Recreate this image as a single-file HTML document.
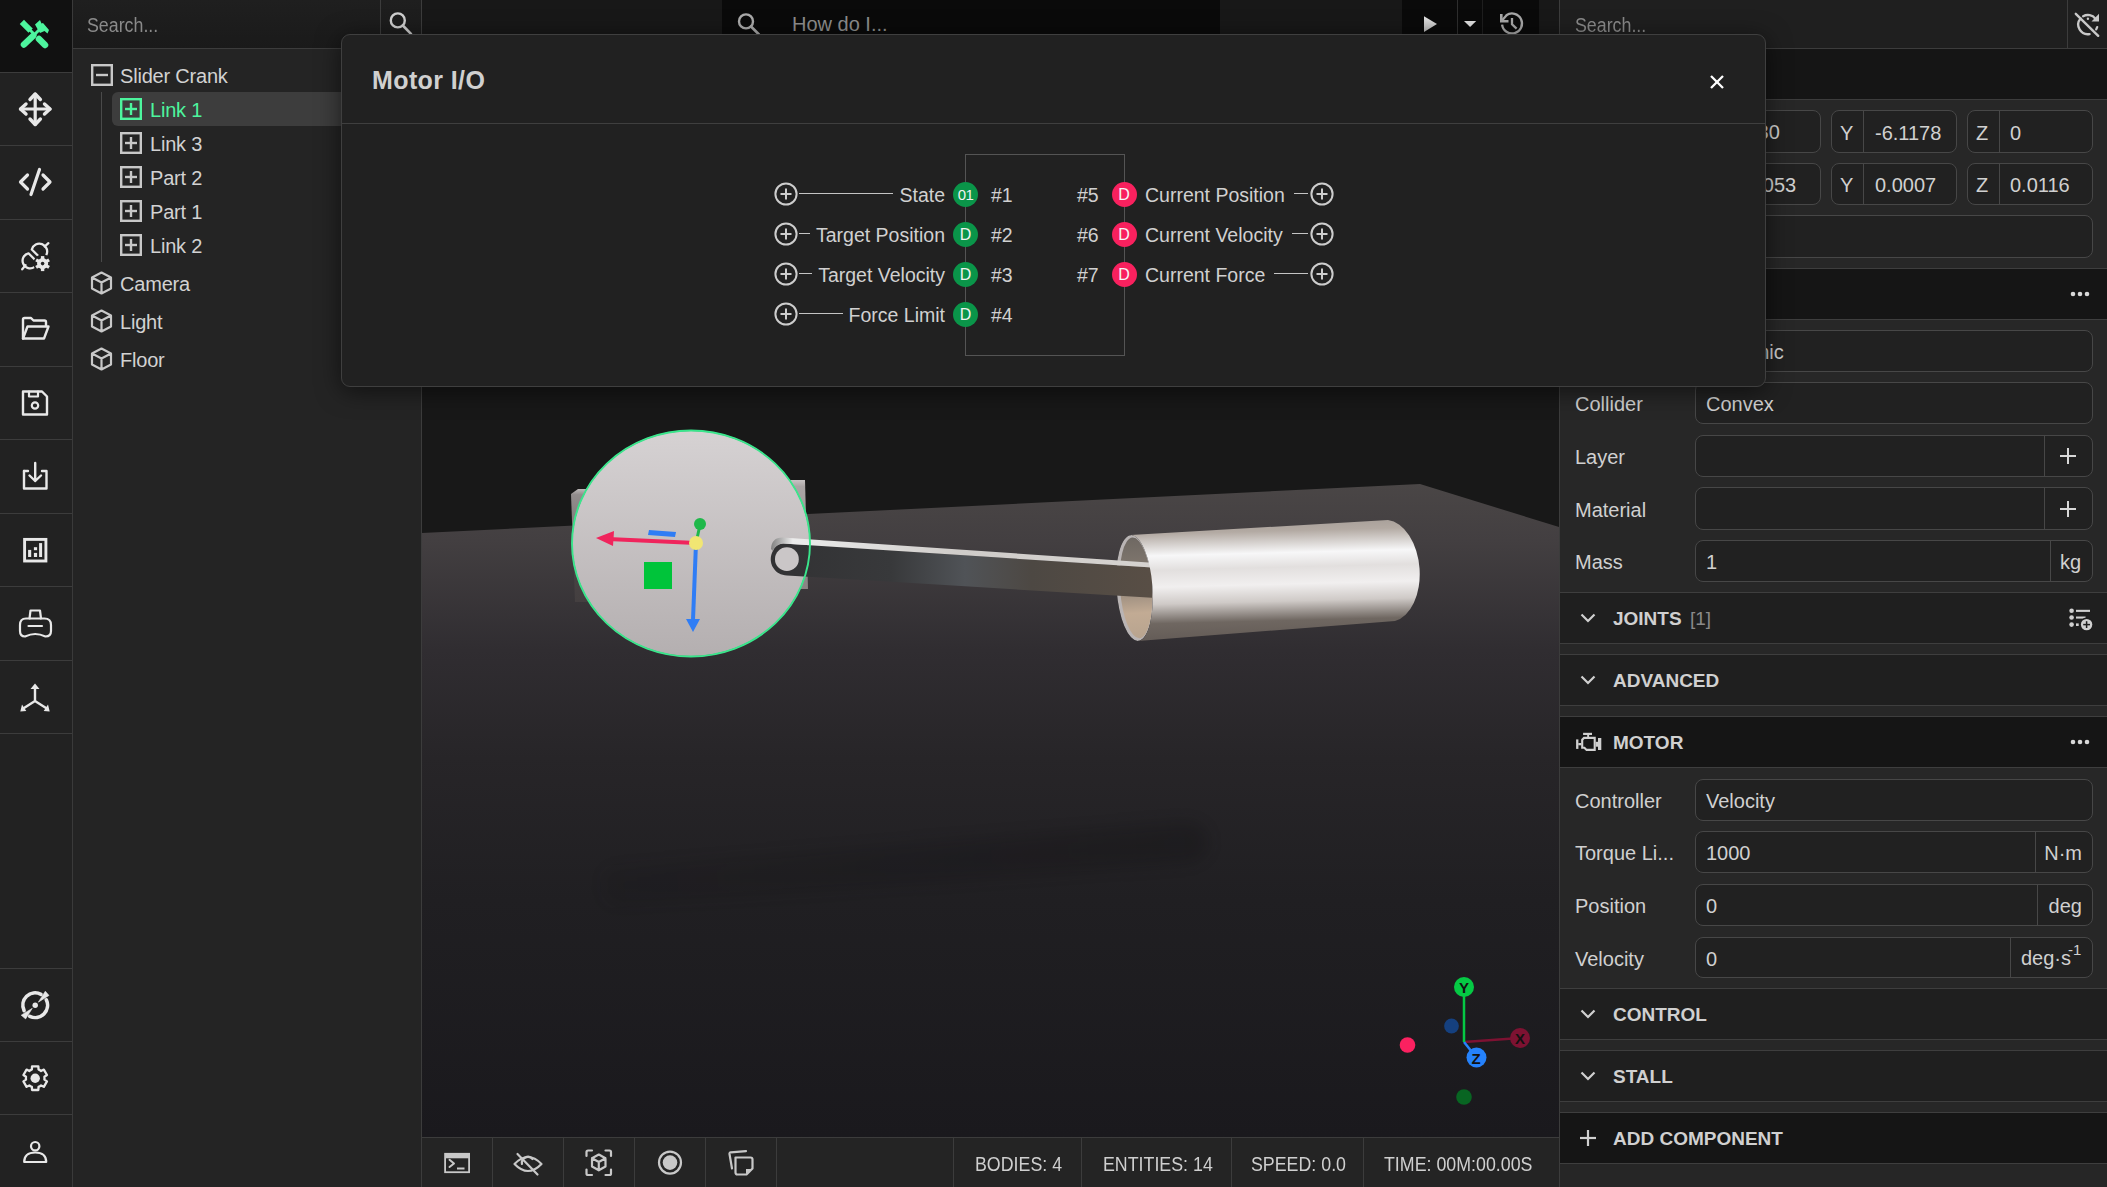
<!DOCTYPE html>
<html><head><meta charset="utf-8">
<style>
html,body{margin:0;padding:0;width:2107px;height:1187px;overflow:hidden;background:#262626;font-family:"Liberation Sans",sans-serif;color:#d0d0d0;}
.a{position:absolute;}
.hl{position:absolute;height:1px;background:#3c3c3c;}
.vl{position:absolute;width:1px;background:#3c3c3c;}
svg{position:absolute;overflow:visible;}
.ico{fill:none;stroke:#e0e0e0;stroke-width:2.4;stroke-linecap:round;stroke-linejoin:round;}
.t{position:absolute;white-space:pre;line-height:1;}
.tree{font-size:20px;color:#d2d2d2;letter-spacing:-0.2px;}
.lbl{font-size:20px;color:#d2d2d2;}
.inp{position:absolute;left:1695px;width:396px;height:40px;border:1px solid #454545;border-radius:8px;background:#212121;box-sizing:content-box;}
.sec{position:absolute;left:1560px;width:547px;background:#1f1f1f;border-top:1px solid #3e3e3e;border-bottom:1px solid #3e3e3e;}
.sech{font-size:19px;font-weight:bold;color:#d0d0d0;}
</style></head><body>

<!-- LEFT TOOLBAR -->
<div class="a" id="toolbar" style="left:0;top:0;width:72px;height:1187px;background:#222222;"></div>
<div class="a" style="left:0;top:0;width:72px;height:72px;background:#111111;"></div>
<div class="vl" style="left:72px;top:0;height:1187px;background:#3a3a3a;"></div>
<div class="hl" style="left:0;top:72px;width:72px;"></div>
<div class="hl" style="left:0;top:145px;width:72px;"></div>
<div class="hl" style="left:0;top:219px;width:72px;"></div>
<div class="hl" style="left:0;top:292px;width:72px;"></div>
<div class="hl" style="left:0;top:366px;width:72px;"></div>
<div class="hl" style="left:0;top:439px;width:72px;"></div>
<div class="hl" style="left:0;top:513px;width:72px;"></div>
<div class="hl" style="left:0;top:586px;width:72px;"></div>
<div class="hl" style="left:0;top:660px;width:72px;"></div>
<div class="hl" style="left:0;top:733px;width:72px;"></div>
<div class="hl" style="left:0;top:968px;width:72px;"></div>
<div class="hl" style="left:0;top:1041px;width:72px;"></div>
<div class="hl" style="left:0;top:1114px;width:72px;"></div>

<!-- TREE PANEL -->
<div class="a" style="left:73px;top:0;width:348px;height:1187px;background:#242424;"></div>
<div class="a" style="left:73px;top:0;width:348px;height:48px;background:linear-gradient(180deg,#1f1f1f,#1a1a1a);"></div>
<div class="hl" style="left:73px;top:48px;width:348px;"></div>
<div class="vl" style="left:380px;top:0;height:48px;"></div>
<div class="vl" style="left:421px;top:0;height:1187px;"></div>
<div class="t" style="left:87px;top:15px;font-size:20px;color:#8a8a8a;transform:scaleX(0.89);transform-origin:0 0;">Search...</div>


<!-- TREE CONTENT -->
<div class="a" style="left:112px;top:92px;width:309px;height:34px;background:#3d3d3d;border-radius:6px 0 0 6px;"></div>
<div class="vl" style="left:101px;top:92px;height:170px;background:#4a4a4a;"></div>
<svg style="left:91px;top:64px" width="22" height="22" viewBox="0 0 22 22"><rect x="1.2" y="1.2" width="19.6" height="19.6" fill="none" stroke="#c8c8c8" stroke-width="2.4"/><line x1="5" y1="11" x2="17" y2="11" stroke="#c8c8c8" stroke-width="2.4"/></svg>
<div class="t tree" style="left:120px;top:66px;">Slider Crank</div>
<svg style="left:120px;top:98px" width="22" height="22" viewBox="0 0 22 22"><rect x="1.2" y="1.2" width="19.6" height="19.6" fill="none" stroke="#4df59e" stroke-width="2.4"/><line x1="5" y1="11" x2="17" y2="11" stroke="#4df59e" stroke-width="2.4"/><line x1="11" y1="5" x2="11" y2="17" stroke="#4df59e" stroke-width="2.4"/></svg>
<div class="t tree" style="left:150px;top:100px;color:#4df59e;">Link 1</div>
<svg style="left:120px;top:132px" width="22" height="22" viewBox="0 0 22 22"><rect x="1.2" y="1.2" width="19.6" height="19.6" fill="none" stroke="#c8c8c8" stroke-width="2.4"/><line x1="5" y1="11" x2="17" y2="11" stroke="#c8c8c8" stroke-width="2.4"/><line x1="11" y1="5" x2="11" y2="17" stroke="#c8c8c8" stroke-width="2.4"/></svg>
<div class="t tree" style="left:150px;top:134px;">Link 3</div>
<svg style="left:120px;top:166px" width="22" height="22" viewBox="0 0 22 22"><rect x="1.2" y="1.2" width="19.6" height="19.6" fill="none" stroke="#c8c8c8" stroke-width="2.4"/><line x1="5" y1="11" x2="17" y2="11" stroke="#c8c8c8" stroke-width="2.4"/><line x1="11" y1="5" x2="11" y2="17" stroke="#c8c8c8" stroke-width="2.4"/></svg>
<div class="t tree" style="left:150px;top:168px;">Part 2</div>
<svg style="left:120px;top:200px" width="22" height="22" viewBox="0 0 22 22"><rect x="1.2" y="1.2" width="19.6" height="19.6" fill="none" stroke="#c8c8c8" stroke-width="2.4"/><line x1="5" y1="11" x2="17" y2="11" stroke="#c8c8c8" stroke-width="2.4"/><line x1="11" y1="5" x2="11" y2="17" stroke="#c8c8c8" stroke-width="2.4"/></svg>
<div class="t tree" style="left:150px;top:202px;">Part 1</div>
<svg style="left:120px;top:234px" width="22" height="22" viewBox="0 0 22 22"><rect x="1.2" y="1.2" width="19.6" height="19.6" fill="none" stroke="#c8c8c8" stroke-width="2.4"/><line x1="5" y1="11" x2="17" y2="11" stroke="#c8c8c8" stroke-width="2.4"/><line x1="11" y1="5" x2="11" y2="17" stroke="#c8c8c8" stroke-width="2.4"/></svg>
<div class="t tree" style="left:150px;top:236px;">Link 2</div>
<svg style="left:90px;top:271px" width="23" height="24" viewBox="0 0 23 24"><path d="M11.5 1.5 L21 6.5 V17.5 L11.5 22.5 L2 17.5 V6.5 Z M2 6.5 L11.5 11.5 L21 6.5 M11.5 11.5 V22.5" fill="none" stroke="#c8c8c8" stroke-width="2.2" stroke-linejoin="round"/></svg>
<div class="t tree" style="left:120px;top:274px;">Camera</div>
<svg style="left:90px;top:309px" width="23" height="24" viewBox="0 0 23 24"><path d="M11.5 1.5 L21 6.5 V17.5 L11.5 22.5 L2 17.5 V6.5 Z M2 6.5 L11.5 11.5 L21 6.5 M11.5 11.5 V22.5" fill="none" stroke="#c8c8c8" stroke-width="2.2" stroke-linejoin="round"/></svg>
<div class="t tree" style="left:120px;top:312px;">Light</div>
<svg style="left:90px;top:347px" width="23" height="24" viewBox="0 0 23 24"><path d="M11.5 1.5 L21 6.5 V17.5 L11.5 22.5 L2 17.5 V6.5 Z M2 6.5 L11.5 11.5 L21 6.5 M11.5 11.5 V22.5" fill="none" stroke="#c8c8c8" stroke-width="2.2" stroke-linejoin="round"/></svg>
<div class="t tree" style="left:120px;top:350px;">Floor</div>

<!-- VIEWPORT -->
<div class="a" id="viewport" style="left:422px;top:0;width:1137px;height:1187px;background:#181818;"></div>
<div class="a" style="left:722px;top:0;width:498px;height:48px;background:#0a0a0a;"></div>
<div class="t" style="left:792px;top:14px;font-size:20px;color:#8e8e8e;">How do I...</div>
<div class="a" style="left:1402px;top:0;width:137px;height:48px;background:#0a0a0a;"></div>
<div class="vl" style="left:1457px;top:0;height:48px;background:#2e2e2e;"></div>
<div class="vl" style="left:1482px;top:0;height:48px;background:#1e1e1e;"></div>


<!-- SCENE -->
<svg class="a" style="left:422px;top:49px;" width="1137" height="1088" viewBox="422 49 1137 1088">
<defs>
<linearGradient id="floorg" x1="0" y1="484" x2="0" y2="1137" gradientUnits="userSpaceOnUse">
<stop offset="0" stop-color="#4a4646"/><stop offset="0.086" stop-color="#433f41"/><stop offset="0.254" stop-color="#302d31"/><stop offset="0.42" stop-color="#272528"/><stop offset="0.637" stop-color="#201f22"/><stop offset="1" stop-color="#1a191d"/>
</linearGradient>
<filter id="blur8" x="-50%" y="-50%" width="200%" height="200%"><feGaussianBlur stdDeviation="9"/></filter>
<linearGradient id="discg" x1="0" y1="0" x2="0" y2="1">
<stop offset="0" stop-color="#d6d2d3"/><stop offset="1" stop-color="#b4afb0"/>
</linearGradient>
<linearGradient id="cylg" x1="0" y1="0" x2="0.06" y2="1">
<stop offset="0" stop-color="#a39b95"/><stop offset="0.12" stop-color="#b3aaa3"/><stop offset="0.3" stop-color="#f7f7f8"/><stop offset="0.42" stop-color="#e2dfde"/><stop offset="0.56" stop-color="#f1efef"/><stop offset="0.7" stop-color="#cfcac7"/><stop offset="0.86" stop-color="#6f6761"/><stop offset="1" stop-color="#645c57"/>
</linearGradient>
<linearGradient id="rodg" x1="780" y1="0" x2="1150" y2="0" gradientUnits="userSpaceOnUse">
<stop offset="0" stop-color="#2b2b2c"/><stop offset="0.25" stop-color="#3a3a3c"/><stop offset="0.45" stop-color="#56585c"/><stop offset="0.7" stop-color="#4e4a48"/><stop offset="1" stop-color="#5b5047"/>
</linearGradient>
<radialGradient id="shadowg" cx="0.5" cy="0.5" r="0.5"><stop offset="0" stop-color="#000" stop-opacity="0.25"/><stop offset="1" stop-color="#000" stop-opacity="0"/></radialGradient>
</defs>
<rect x="422" y="49" width="1137" height="1088" fill="#181818"/>
<polygon points="422,533 1420,484 1559,527 1559,1137 422,1137" fill="url(#floorg)"/>

<!-- bracket -->
<defs><linearGradient id="brkL" x1="0" y1="489" x2="0" y2="602" gradientUnits="userSpaceOnUse"><stop offset="0" stop-color="#bdb9b9"/><stop offset="0.05" stop-color="#928d8d"/><stop offset="0.3" stop-color="#827c7c"/><stop offset="0.35" stop-color="#4a4647"/><stop offset="1" stop-color="#443f40"/></linearGradient>
<linearGradient id="brkR" x1="0" y1="480" x2="0" y2="589" gradientUnits="userSpaceOnUse"><stop offset="0" stop-color="#c8c4c4"/><stop offset="0.06" stop-color="#aaa5a5"/><stop offset="1" stop-color="#8a8383"/></linearGradient></defs>
<polygon points="571,494 578,489 600,489 600,602 575,602" fill="url(#brkL)"/>
<polygon points="780,480 805,480 808,589 780,589" fill="url(#brkR)"/>
<!-- disc -->
<ellipse cx="691" cy="543.5" rx="119" ry="113" fill="url(#discg)" stroke="#6a6868" stroke-width="1"/>
<!-- gizmo -->
<polygon points="649,530 676,532 675,537 648,535" fill="#2f7df5"/>
<rect x="644" y="562" width="28" height="27" fill="#00c43a"/>
<line x1="696" y1="543" x2="608" y2="539" stroke="#f0245c" stroke-width="4"/>
<polygon points="596,538 614,531 613,546" fill="#f0245c"/>
<line x1="696" y1="543" x2="693" y2="620" stroke="#2f7df5" stroke-width="4"/>
<polygon points="686,619 700,619 693,632" fill="#2f7df5"/>
<line x1="696" y1="543" x2="700" y2="525" stroke="#1fb84a" stroke-width="3"/>
<circle cx="700" cy="524" r="6" fill="#1fb84a"/>
<circle cx="696" cy="543" r="7" fill="#f1e673"/>
<!-- cyl inner -->
<defs>
<clipPath id="openclip"><ellipse cx="1134.5" cy="588" rx="18" ry="53" transform="rotate(-4 1134.5 588)"/></clipPath>
<linearGradient id="innerg" x1="0" y1="0" x2="0" y2="1"><stop offset="0" stop-color="#6e6862"/><stop offset="0.45" stop-color="#8a7f75"/><stop offset="0.75" stop-color="#c2ab94"/><stop offset="1" stop-color="#b8a48f"/></linearGradient>
</defs>
<ellipse cx="1134.5" cy="588" rx="18" ry="53" transform="rotate(-4 1134.5 588)"/></clipPath>
<linearGradient id="innerg" x1="0" y1="0" x2="0" y2="1"><stop offset="0" stop-color="#6e6862"/><stop offset="0.45" stop-color="#8a7f75"/><stop offset="0.75" stop-color="#c2ab94"/><stop offset="1" stop-color="#b8a48f"/></linearGradient>
</defs>
<ellipse cx="1134.5" cy="588" rx="18" ry="53" transform="rotate(-4 1134.5 588)" fill="#b9b4b4"/>
<ellipse cx="1136.0" cy="588" rx="16" ry="50.5" transform="rotate(-4 1134.5 588)" fill="url(#innerg)"/>
<!-- rod -->
<defs>
<linearGradient id="rodg2" x1="780" y1="0" x2="1150" y2="0" gradientUnits="userSpaceOnUse">
<stop offset="0" stop-color="#323234"/><stop offset="0.3" stop-color="#38393b"/><stop offset="0.5" stop-color="#505357"/><stop offset="0.68" stop-color="#4d4843"/><stop offset="1" stop-color="#584e45"/>
</linearGradient>
<linearGradient id="rodtop" x1="770" y1="0" x2="1150" y2="0" gradientUnits="userSpaceOnUse">
<stop offset="0" stop-color="#7c7c7c"/><stop offset="0.06" stop-color="#ececec"/><stop offset="0.5" stop-color="#cfccc9"/><stop offset="1" stop-color="#d6d3d0"/>
</linearGradient>
</defs>
<path d="M772.9,551.1 Q775,544 783,543.5 L1152,567.6 L1152,597.8 L900,582.3 L786.9,575.4 A16.2,16.2 0 0 1 772.9,551.1 Z" fill="url(#rodg2)"/>
<path d="M771,549 Q771.5,537.5 782.5,537.5 L1152,562.7 L1152,567.6 L783,543.5 Q776,544 772.9,551.1 Z" fill="url(#rodtop)"/>
<circle cx="786.9" cy="559.2" r="11.9" fill="#cac6c7"/>
<ellipse cx="691" cy="543.5" rx="119" ry="113" fill="none" stroke="#3ae68c" stroke-width="1.9"/>
<!-- cylinder -->

<path d="M1130.8,535.1 L1388,520 A32,51 -4 0 1 1395,621 L1138.2,640.9 A18,53 -4 0 0 1130.8,535.1 Z" fill="url(#cylg)"/>
<!-- axis gizmo -->
<circle cx="1407.5" cy="1045" r="7.8" fill="#fb2160"/>
<circle cx="1451.5" cy="1026" r="7.4" fill="#15407f"/>
<circle cx="1464" cy="1097" r="7.8" fill="#086522"/>
<line x1="1464" y1="1042" x2="1520" y2="1038" stroke="#7d1232" stroke-width="2.5"/>
<line x1="1464" y1="1042" x2="1476" y2="1057" stroke="#2582fb" stroke-width="2.5"/>
<line x1="1464" y1="1042" x2="1464" y2="987" stroke="#05c944" stroke-width="2.5"/>
<circle cx="1520" cy="1038" r="10" fill="#7d1232"/>
<circle cx="1476.5" cy="1057.5" r="10" fill="#2582fb"/>
<circle cx="1464" cy="987" r="10" fill="#05c944"/>
<text x="1520" y="1044" font-size="15" font-weight="bold" text-anchor="middle" fill="#111" font-family="Liberation Sans">X</text>
<text x="1476" y="1064" font-size="15" font-weight="bold" text-anchor="middle" fill="#111" font-family="Liberation Sans">Z</text>
<text x="1464" y="993" font-size="15" font-weight="bold" text-anchor="middle" fill="#111" font-family="Liberation Sans">Y</text>
</svg>
<div class="a" style="left:600px;top:843px;width:610px;height:42px;border-radius:20px 30px 30px 20px;background:linear-gradient(90deg,rgba(12,11,14,0.1),rgba(12,11,14,0.2) 60%,rgba(12,11,14,0.26));transform:rotate(-4.4deg);filter:blur(9px);"></div>
<!-- STATUS BAR -->
<div class="a" style="left:422px;top:1137px;width:1137px;height:50px;background:#242424;"></div>
<div class="hl" style="left:422px;top:1137px;width:1137px;"></div>
<div class="vl" style="left:492px;top:1138px;height:49px;"></div>
<div class="vl" style="left:563px;top:1138px;height:49px;"></div>
<div class="vl" style="left:634px;top:1138px;height:49px;"></div>
<div class="vl" style="left:705px;top:1138px;height:49px;"></div>
<div class="vl" style="left:776px;top:1138px;height:49px;"></div>
<div class="vl" style="left:953px;top:1138px;height:49px;"></div>
<div class="vl" style="left:1081px;top:1138px;height:49px;"></div>
<div class="vl" style="left:1231px;top:1138px;height:49px;"></div>
<div class="vl" style="left:1363px;top:1138px;height:49px;"></div>
<div class="t" style="left:975px;top:1154px;font-size:20px;color:#cfcfcf;transform:scaleX(0.89);transform-origin:0 0;">BODIES: 4</div>
<div class="t" style="left:1103px;top:1154px;font-size:20px;color:#cfcfcf;transform:scaleX(0.89);transform-origin:0 0;">ENTITIES: 14</div>
<div class="t" style="left:1251px;top:1154px;font-size:20px;color:#cfcfcf;transform:scaleX(0.89);transform-origin:0 0;">SPEED: 0.0</div>
<div class="t" style="left:1384px;top:1154px;font-size:20px;color:#cfcfcf;transform:scaleX(0.89);transform-origin:0 0;">TIME: 00M:00.00S</div>

<!-- RIGHT PANEL -->
<div class="vl" style="left:1559px;top:0;height:1187px;"></div>
<div class="a" style="left:1560px;top:0;width:547px;height:48px;background:#1f1f1f;"></div>
<div class="hl" style="left:1560px;top:48px;width:547px;"></div>
<div class="vl" style="left:2067px;top:0;height:48px;"></div>
<div class="t" style="left:1575px;top:15px;font-size:20px;color:#8a8a8a;transform:scaleX(0.89);transform-origin:0 0;">Search...</div>
<div class="a" style="left:1560px;top:49px;width:547px;height:50px;background:#151515;"></div>
<div class="hl" style="left:1560px;top:99px;width:547px;"></div>

<!-- RIGHT CONTENT -->
<div class="a" style="left:1560px;top:100px;width:547px;height:168px;background:#272727;"></div>
<div class="a" style="left:1695px;top:110px;width:124px;height:41px;border:1px solid #474747;border-radius:8px;background:#212121;"></div>
<div class="vl" style="left:1727px;top:110px;height:43px;background:#474747;"></div>
<div class="a" style="left:1831px;top:110px;width:124px;height:41px;border:1px solid #474747;border-radius:8px;background:#212121;"></div>
<div class="vl" style="left:1863px;top:110px;height:43px;background:#474747;"></div>
<div class="t" style="left:1840px;top:122.6px;font-size:20px;color:#d0d0d0;">Y</div>
<div class="t" style="left:1875px;top:122.6px;font-size:20px;color:#d0d0d0;">-6.1178</div>
<div class="a" style="left:1967px;top:110px;width:124px;height:41px;border:1px solid #474747;border-radius:8px;background:#212121;"></div>
<div class="vl" style="left:1999px;top:110px;height:43px;background:#474747;"></div>
<div class="t" style="left:1976px;top:122.6px;font-size:20px;color:#d0d0d0;">Z</div>
<div class="t" style="left:2010px;top:122.6px;font-size:20px;color:#d0d0d0;">0</div>
<div class="a" style="left:1695px;top:163px;width:124px;height:40px;border:1px solid #474747;border-radius:8px;background:#212121;"></div>
<div class="vl" style="left:1727px;top:163px;height:42px;background:#474747;"></div>
<div class="a" style="left:1831px;top:163px;width:124px;height:40px;border:1px solid #474747;border-radius:8px;background:#212121;"></div>
<div class="vl" style="left:1863px;top:163px;height:42px;background:#474747;"></div>
<div class="t" style="left:1840px;top:175.1px;font-size:20px;color:#d0d0d0;">Y</div>
<div class="t" style="left:1875px;top:175.1px;font-size:20px;color:#d0d0d0;">0.0007</div>
<div class="a" style="left:1967px;top:163px;width:124px;height:40px;border:1px solid #474747;border-radius:8px;background:#212121;"></div>
<div class="vl" style="left:1999px;top:163px;height:42px;background:#474747;"></div>
<div class="t" style="left:1976px;top:175.1px;font-size:20px;color:#d0d0d0;">Z</div>
<div class="t" style="left:2010px;top:175.1px;font-size:20px;color:#d0d0d0;">0.0116</div>
<div class="t" style="left:1712px;top:122.1px;font-size:20px;color:#d0d0d0;">-1.2380</div>
<div class="t" style="left:1735px;top:175.1px;font-size:20px;color:#d0d0d0;">0.0053</div>
<div class="a" style="left:1695px;top:215px;width:396px;height:41px;border:1px solid #474747;border-radius:8px;background:#212121;"></div>
<div class="hl" style="left:1560px;top:268px;width:547px;background:#3e3e3e;"></div>
<div class="a" style="left:1560px;top:269px;width:547px;height:50px;background:#151515;"></div>
<div class="hl" style="left:1560px;top:319px;width:547px;background:#3e3e3e;"></div>
<svg style="left:2070px;top:291px" width="20" height="6" viewBox="0 0 20 6"><circle cx="3" cy="3" r="2.3" fill="#d8d8d8"/><circle cx="10" cy="3" r="2.3" fill="#d8d8d8"/><circle cx="17" cy="3" r="2.3" fill="#d8d8d8"/></svg>
<div class="a" style="left:1560px;top:320px;width:547px;height:272px;background:#272727;"></div>
<div class="a" style="left:1695px;top:330px;width:396px;height:40px;border:1px solid #474747;border-radius:8px;background:#212121;"></div>
<div class="t" style="left:1706px;top:342.1px;font-size:20px;color:#d0d0d0;">Dynamic</div>
<div class="a" style="left:1695px;top:382px;width:396px;height:40px;border:1px solid #474747;border-radius:8px;background:#212121;"></div>
<div class="t" style="left:1575px;top:394.1px;font-size:20px;color:#d0d0d0;">Collider</div>
<div class="t" style="left:1706px;top:394.1px;font-size:20px;color:#d0d0d0;">Convex</div>
<div class="a" style="left:1695px;top:435px;width:396px;height:40px;border:1px solid #474747;border-radius:8px;background:#212121;"></div>
<div class="t" style="left:1575px;top:447.1px;font-size:20px;color:#d0d0d0;">Layer</div>
<div class="vl" style="left:2044px;top:435px;height:42px;background:#474747;"></div>
<svg style="left:2059px;top:447.0px" width="18" height="18" viewBox="0 0 18 18"><line x1="1" y1="9" x2="17" y2="9" stroke="#d8d8d8" stroke-width="2"/><line x1="9" y1="1" x2="9" y2="17" stroke="#d8d8d8" stroke-width="2"/></svg>
<div class="a" style="left:1695px;top:487px;width:396px;height:41px;border:1px solid #474747;border-radius:8px;background:#212121;"></div>
<div class="t" style="left:1575px;top:499.6px;font-size:20px;color:#d0d0d0;">Material</div>
<div class="vl" style="left:2044px;top:487px;height:43px;background:#474747;"></div>
<svg style="left:2059px;top:499.5px" width="18" height="18" viewBox="0 0 18 18"><line x1="1" y1="9" x2="17" y2="9" stroke="#d8d8d8" stroke-width="2"/><line x1="9" y1="1" x2="9" y2="17" stroke="#d8d8d8" stroke-width="2"/></svg>
<div class="a" style="left:1695px;top:540px;width:396px;height:40px;border:1px solid #474747;border-radius:8px;background:#212121;"></div>
<div class="t" style="left:1575px;top:552.1px;font-size:20px;color:#d0d0d0;">Mass</div>
<div class="t" style="left:1706px;top:552.1px;font-size:20px;color:#d0d0d0;">1</div>
<div class="vl" style="left:2050px;top:540px;height:42px;background:#474747;"></div>
<div class="t" style="left:2060px;top:552.1px;font-size:20px;color:#d0d0d0;">kg</div>
<div class="hl" style="left:1560px;top:592px;width:547px;background:#3e3e3e;"></div>
<div class="a" style="left:1560px;top:593px;width:547px;height:50px;background:#1f1f1f;"></div>
<div class="hl" style="left:1560px;top:643px;width:547px;background:#3e3e3e;"></div>
<svg style="left:1580px;top:613.0px" width="16" height="10" viewBox="0 0 16 10"><polyline points="1.5,1.5 8,8 14.5,1.5" fill="none" stroke="#d0d0d0" stroke-width="2.2"/></svg>
<div class="t" style="left:1613px;top:608.9px;font-size:19px;font-weight:bold;color:#d0d0d0;">JOINTS</div>
<div class="t" style="left:1690px;top:608.9px;font-size:19px;color:#8a8a8a;">[1]</div>
<svg style="left:0;top:0" width="2107" height="1187" viewBox="0 0 2107 1187"><circle cx="2071.6" cy="610.8" r="2.3" fill="#d0d0d0"/><circle cx="2071.6" cy="617.5" r="2.3" fill="#d0d0d0"/><circle cx="2071.6" cy="624.6" r="2.3" fill="#d0d0d0"/><rect x="2076" y="609.8" width="14" height="2.1" fill="#d0d0d0"/><rect x="2076" y="616.5" width="9.6" height="2.1" fill="#d0d0d0"/><rect x="2076" y="623.4" width="2.7" height="2.6" fill="#d0d0d0"/><circle cx="2086.6" cy="624.6" r="7" fill="#1f1f1f"/><circle cx="2086.6" cy="624.6" r="5.7" fill="#d0d0d0"/><line x1="2083.2" y1="624.6" x2="2090" y2="624.6" stroke="#1f1f1f" stroke-width="1.5"/><line x1="2086.6" y1="621.2" x2="2086.6" y2="628" stroke="#1f1f1f" stroke-width="1.5"/></svg>
<div class="a" style="left:1560px;top:644px;width:547px;height:10px;background:#272727;"></div>
<div class="hl" style="left:1560px;top:654px;width:547px;background:#3e3e3e;"></div>
<div class="a" style="left:1560px;top:655px;width:547px;height:50px;background:#1f1f1f;"></div>
<div class="hl" style="left:1560px;top:705px;width:547px;background:#3e3e3e;"></div>
<svg style="left:1580px;top:675.0px" width="16" height="10" viewBox="0 0 16 10"><polyline points="1.5,1.5 8,8 14.5,1.5" fill="none" stroke="#d0d0d0" stroke-width="2.2"/></svg>
<div class="t" style="left:1613px;top:670.9px;font-size:19px;font-weight:bold;color:#d0d0d0;">ADVANCED</div>
<div class="a" style="left:1560px;top:706px;width:547px;height:10px;background:#272727;"></div>
<div class="hl" style="left:1560px;top:716px;width:547px;background:#3e3e3e;"></div>
<div class="a" style="left:1560px;top:717px;width:547px;height:50px;background:#151515;"></div>
<div class="hl" style="left:1560px;top:767px;width:547px;background:#3e3e3e;"></div>
<div class="t" style="left:1613px;top:732.9px;font-size:19px;font-weight:bold;color:#d0d0d0;">MOTOR</div>
<svg style="left:2070px;top:739px" width="20" height="6" viewBox="0 0 20 6"><circle cx="3" cy="3" r="2.3" fill="#d8d8d8"/><circle cx="10" cy="3" r="2.3" fill="#d8d8d8"/><circle cx="17" cy="3" r="2.3" fill="#d8d8d8"/></svg>
<svg style="left:0;top:0" width="2107" height="1187" viewBox="0 0 2107 1187"><rect x="1583.1" y="732.8" width="8.9" height="2.2" fill="#d0d0d0"/><rect x="1587.2" y="734.9" width="1.9" height="2.6" fill="#d0d0d0"/><path d="M1584,737.9 L1594.7,737.9 L1594.7,749.9 L1586.6,749.9 L1584.4,747.7 L1582.2,747.7 L1582.2,739.7 Z" fill="none" stroke="#d0d0d0" stroke-width="2.1" stroke-linejoin="miter"/><rect x="1576.1" y="739.4" width="2.3" height="9.5" fill="#d0d0d0"/><rect x="1578.3" y="743" width="3" height="2.3" fill="#d0d0d0"/><rect x="1598" y="738" width="3.3" height="12" fill="#d0d0d0"/><rect x="1595.7" y="741.8" width="2.4" height="4.9" fill="#d0d0d0"/></svg>
<div class="a" style="left:1560px;top:768px;width:547px;height:220px;background:#272727;"></div>
<div class="a" style="left:1695px;top:779px;width:396px;height:40px;border:1px solid #474747;border-radius:8px;background:#212121;"></div>
<div class="t" style="left:1575px;top:791.1px;font-size:20px;color:#d0d0d0;">Controller</div>
<div class="t" style="left:1706px;top:791.1px;font-size:20px;color:#d0d0d0;">Velocity</div>
<div class="a" style="left:1695px;top:831px;width:396px;height:40px;border:1px solid #474747;border-radius:8px;background:#212121;"></div>
<div class="t" style="left:1575px;top:843.1px;font-size:20px;color:#d0d0d0;">Torque Li...</div>
<div class="t" style="left:1706px;top:843.1px;font-size:20px;color:#d0d0d0;">1000</div>
<div class="vl" style="left:2035px;top:831px;height:42px;background:#474747;"></div>
<div class="t" style="left:2044.2px;top:843.1px;font-size:20px;color:#d0d0d0;">N·m</div>
<div class="a" style="left:1695px;top:884px;width:396px;height:40px;border:1px solid #474747;border-radius:8px;background:#212121;"></div>
<div class="t" style="left:1575px;top:896.1px;font-size:20px;color:#d0d0d0;">Position</div>
<div class="t" style="left:1706px;top:896.1px;font-size:20px;color:#d0d0d0;">0</div>
<div class="vl" style="left:2037px;top:884px;height:42px;background:#474747;"></div>
<div class="t" style="left:2048.6px;top:896.1px;font-size:20px;color:#d0d0d0;">deg</div>
<div class="a" style="left:1695px;top:937px;width:396px;height:39px;border:1px solid #474747;border-radius:8px;background:#212121;"></div>
<div class="t" style="left:1575px;top:948.6px;font-size:20px;color:#d0d0d0;">Velocity</div>
<div class="t" style="left:1706px;top:948.6px;font-size:20px;color:#d0d0d0;">0</div>
<div class="vl" style="left:2010px;top:937px;height:41px;background:#474747;"></div>
<div class="t" style="left:2021px;top:947.8px;font-size:20px;color:#d0d0d0;">deg·s</div><div class="t" style="left:2068px;top:941.5px;font-size:15px;color:#d0d0d0;">-1</div>
<div class="hl" style="left:1560px;top:988px;width:547px;background:#3e3e3e;"></div>
<div class="a" style="left:1560px;top:989px;width:547px;height:50px;background:#1f1f1f;"></div>
<div class="hl" style="left:1560px;top:1039px;width:547px;background:#3e3e3e;"></div>
<svg style="left:1580px;top:1009.0px" width="16" height="10" viewBox="0 0 16 10"><polyline points="1.5,1.5 8,8 14.5,1.5" fill="none" stroke="#d0d0d0" stroke-width="2.2"/></svg>
<div class="t" style="left:1613px;top:1004.9px;font-size:19px;font-weight:bold;color:#d0d0d0;">CONTROL</div>
<div class="a" style="left:1560px;top:1040px;width:547px;height:10px;background:#272727;"></div>
<div class="hl" style="left:1560px;top:1050px;width:547px;background:#3e3e3e;"></div>
<div class="a" style="left:1560px;top:1051px;width:547px;height:50px;background:#1f1f1f;"></div>
<div class="hl" style="left:1560px;top:1101px;width:547px;background:#3e3e3e;"></div>
<svg style="left:1580px;top:1071.0px" width="16" height="10" viewBox="0 0 16 10"><polyline points="1.5,1.5 8,8 14.5,1.5" fill="none" stroke="#d0d0d0" stroke-width="2.2"/></svg>
<div class="t" style="left:1613px;top:1066.9px;font-size:19px;font-weight:bold;color:#d0d0d0;">STALL</div>
<div class="a" style="left:1560px;top:1102px;width:547px;height:10px;background:#272727;"></div>
<div class="hl" style="left:1560px;top:1112px;width:547px;background:#3e3e3e;"></div>
<div class="a" style="left:1560px;top:1113px;width:547px;height:50px;background:#151515;"></div>
<div class="hl" style="left:1560px;top:1163px;width:547px;background:#3e3e3e;"></div>
<svg style="left:1579px;top:1129.0px" width="18" height="18" viewBox="0 0 18 18"><line x1="1" y1="9" x2="17" y2="9" stroke="#d0d0d0" stroke-width="2.2"/><line x1="9" y1="1" x2="9" y2="17" stroke="#d0d0d0" stroke-width="2.2"/></svg>
<div class="t" style="left:1613px;top:1128.9px;font-size:19px;font-weight:bold;color:#d0d0d0;">ADD COMPONENT</div>
<div class="a" style="left:1560px;top:1164px;width:547px;height:23px;background:#262626;"></div>
<!-- ICONS -->
<svg style="left:0;top:0;pointer-events:none" width="2107" height="1187" viewBox="0 0 2107 1187"><g><line x1="24" y1="24" x2="28.5" y2="28.5" stroke="#4df59e" stroke-width="6" stroke-linecap="square"/><line x1="27" y1="27" x2="36" y2="36" stroke="#4df59e" stroke-width="3"/><line x1="39" y1="39" x2="45" y2="45" stroke="#4df59e" stroke-width="6.5" stroke-linecap="round"/><line x1="24" y1="44.5" x2="33" y2="36" stroke="#4df59e" stroke-width="6.5" stroke-linecap="round"/><line x1="31" y1="38" x2="41" y2="28" stroke="#4df59e" stroke-width="3"/><path d="M35 24.5 L40 20 L41.5 23.5 L43 23 L49 30 L47.5 33.5 L44.5 31 L40 33 L37.5 29 Z" fill="#4df59e"/></g><path d="M20.5 109 H50 M35.2 94 V124.5" fill="none" stroke="#e8e8e8" stroke-width="3.2" stroke-linecap="round" stroke-linejoin="round" /><path d="M26 104 L20.5 109 L26 114 M44.5 104 L50 109 L44.5 114 M30 99.5 L35.2 94 L40.4 99.5 M30 119 L35.2 124.5 L40.4 119" fill="none" stroke="#e8e8e8" stroke-width="3.4" stroke-linecap="round" stroke-linejoin="round" stroke-linecap="square"/><path d="M27.5 175 L20.5 182 L27.5 189 M43 175 L50 182 L43 189 M31 194.5 L39.5 169.5" fill="none" stroke="#e8e8e8" stroke-width="3.2" stroke-linecap="round" stroke-linejoin="round" /><path d="M38.6 256.3 L31.8 249.5 A7.8 7.8 0 1 1 46.4 254.8" fill="none" stroke="#e8e8e8" stroke-width="2.3" stroke-linecap="round" stroke-linejoin="round" /><path d="M44.6 246.6 L48.4 243.2" fill="none" stroke="#e8e8e8" stroke-width="2.3" stroke-linecap="round" stroke-linejoin="round" /><path d="M35.2 260 L28.5 253.3 A7.6 7.6 0 1 0 34.6 266.9" fill="none" stroke="#e8e8e8" stroke-width="2.3" stroke-linecap="round" stroke-linejoin="round" /><path d="M25.6 265.1 L22.2 269.3" fill="none" stroke="#e8e8e8" stroke-width="2.3" stroke-linecap="round" stroke-linejoin="round" /><g transform="translate(42.6 263.6)"><circle r="9.3" fill="#222"/><rect x="-1.7" y="-7.5" width="3.4" height="3.5" fill="#e8e8e8" transform="rotate(0)"/><rect x="-1.7" y="-7.5" width="3.4" height="3.5" fill="#e8e8e8" transform="rotate(60)"/><rect x="-1.7" y="-7.5" width="3.4" height="3.5" fill="#e8e8e8" transform="rotate(120)"/><rect x="-1.7" y="-7.5" width="3.4" height="3.5" fill="#e8e8e8" transform="rotate(180)"/><rect x="-1.7" y="-7.5" width="3.4" height="3.5" fill="#e8e8e8" transform="rotate(240)"/><rect x="-1.7" y="-7.5" width="3.4" height="3.5" fill="#e8e8e8" transform="rotate(300)"/><circle r="5.5" fill="#e8e8e8"/><circle r="1.8" fill="#222"/></g><path d="M23 338.5 V319.5 Q23 318 24.5 318 H31 L33.5 320.5 H44.5 Q46 320.5 46 322 V325.5" fill="none" stroke="#e8e8e8" stroke-width="2.4" stroke-linecap="round" stroke-linejoin="round" /><path d="M23 338.5 L27.5 326.5 H48.5 L44 338.5 Z" fill="none" stroke="#e8e8e8" stroke-width="2.4" stroke-linecap="round" stroke-linejoin="round" /><path d="M23 391.5 H42 L47 396.5 V414.5 H23 Z" fill="none" stroke="#e8e8e8" stroke-width="2.4" stroke-linecap="round" stroke-linejoin="round" /><path d="M29 391.5 V396.5 H38 V391.5" fill="none" stroke="#e8e8e8" stroke-width="2.2" stroke-linecap="round" stroke-linejoin="round" /><circle cx="35" cy="405.5" r="3.2" fill="none" stroke="#e8e8e8" stroke-width="2.2"/><path d="M24 471 V488.5 H46.5 V471 H42" fill="none" stroke="#e8e8e8" stroke-width="2.4" stroke-linecap="round" stroke-linejoin="round" /><path d="M28 471 H24" fill="none" stroke="#e8e8e8" stroke-width="2.4" stroke-linecap="round" stroke-linejoin="round" /><path d="M35.2 463 V481 M29.5 475.5 L35.2 481 L41 475.5" fill="none" stroke="#e8e8e8" stroke-width="2.4" stroke-linecap="round" stroke-linejoin="round" /><rect x="24.6" y="539.4" width="21.3" height="21.6" fill="none" stroke="#e8e8e8" stroke-width="2.9"/><rect x="28.1" y="549.9" width="3.1" height="7.1" fill="#e8e8e8"/><rect x="33.9" y="552.9" width="3.2" height="4.1" fill="#e8e8e8"/><rect x="33.9" y="547.2" width="3.2" height="3" fill="#e8e8e8"/><rect x="39.1" y="543.1" width="3" height="13.9" fill="#e8e8e8"/><path d="M20 625 Q20 618.5 26 618.5 H44.5 Q51 618.5 51 625 V631 Q51 636.5 45.5 636.5 Q40 634 35.2 634 Q30.5 634 25 636.5 Q20 636.5 20 631 Z" fill="none" stroke="#e8e8e8" stroke-width="2.2" stroke-linecap="round" stroke-linejoin="round" /><path d="M29.5 618.5 L30.5 610.5 H40 L41 618.5" fill="none" stroke="#e8e8e8" stroke-width="2.2" stroke-linecap="round" stroke-linejoin="round" /><path d="M28.5 626 H42" fill="none" stroke="#e8e8e8" stroke-width="2.2" stroke-linecap="round" stroke-linejoin="round" /><path d="M35 701 V687 M35 701 L24 708 M35 701 L46 708" fill="none" stroke="#e8e8e8" stroke-width="2.4" stroke-linecap="round" stroke-linejoin="round" /><path d="M35 683.5 L39.5 689 H30.5 Z M20.3 711.5 L22 704.5 L26.3 711 Z M49.7 711.5 L48 704.5 L43.7 711 Z" fill="#e8e8e8"/><path d="M41.00 994.30 A12.35 12.35 0 0 0 24.10 1010.61" fill="none" stroke="#e8e8e8" stroke-width="3.6" stroke-linecap="round" stroke-linejoin="round" stroke-linecap="butt"/><path d="M46.30 999.79 A12.35 12.35 0 0 1 29.79 1016.30" fill="none" stroke="#e8e8e8" stroke-width="3.6" stroke-linecap="round" stroke-linejoin="round" stroke-linecap="butt"/><path d="M38.3 1002.2 L45.3 991.2 L49 995.4 Z M32.3 1008.3 L21.2 1015.2 L25.6 1018.9 Z" fill="#e8e8e8" stroke="#e8e8e8" stroke-width="0.6" stroke-linejoin="round"/><circle cx="35.2" cy="1005.2" r="2.7" fill="#e8e8e8"/><g transform="translate(35.2 1078.2)"><path d="M-4.65 -8.05 L-3.33 -8.68 L-3.16 -11.78 L3.16 -11.78 L3.33 -8.68 L4.65 -8.05 L5.85 -7.23 L8.63 -8.63 L11.78 -3.16 L9.19 -1.45 L9.30 0.00 L9.19 1.45 L11.78 3.16 L8.63 8.63 L5.85 7.23 L4.65 8.05 L3.33 8.68 L3.16 11.78 L-3.16 11.78 L-3.33 8.68 L-4.65 8.05 L-5.85 7.23 L-8.63 8.63 L-11.78 3.16 L-9.19 1.45 L-9.30 0.00 L-9.19 -1.45 L-11.78 -3.16 L-8.63 -8.63 L-5.85 -7.23 Z" fill="none" stroke="#e8e8e8" stroke-width="2.3" stroke-linejoin="round"/><circle r="4.7" fill="#e8e8e8"/></g><circle cx="35.2" cy="1146.2" r="4.2" fill="none" stroke="#e8e8e8" stroke-width="2.2"/><path d="M24.2 1162 Q24.2 1152.5 35.2 1152.5 Q46.2 1152.5 46.2 1162 Z" fill="none" stroke="#e8e8e8" stroke-width="2.2" stroke-linecap="round" stroke-linejoin="round" /><circle cx="397.8" cy="20.4" r="7" fill="none" stroke="#cfcfcf" stroke-width="2.4"/><path d="M402.8 25.5 L411 33.8" fill="none" stroke="#cfcfcf" stroke-width="2.6" stroke-linecap="round" stroke-linejoin="round" /><circle cx="746" cy="21.4" r="7" fill="none" stroke="#ababab" stroke-width="2.4"/><path d="M751 26.5 L759 34.5" fill="none" stroke="#ababab" stroke-width="2.6" stroke-linecap="round" stroke-linejoin="round" /><defs><linearGradient id="playg" x1="0" y1="0" x2="0" y2="1"><stop offset="0" stop-color="#e6e6e6"/><stop offset="1" stop-color="#b8b8b8"/></linearGradient></defs><path d="M1424 16.3 L1437 24 L1424 32 Z" fill="url(#playg)"/><path d="M1464 21 H1476.2 L1470.1 27 Z" fill="#e0e0e0"/><path d="M1506.3 15.3 A10 10 0 1 1 1502.1 24.6" fill="none" stroke="#a8a8a8" stroke-width="2.3" stroke-linecap="butt"/><path d="M1501.3 14 V21.2 H1508.5" fill="none" stroke="#a8a8a8" stroke-width="2.6" stroke-linejoin="miter"/><path d="M1502 20.5 L1506.8 15" stroke="#a8a8a8" stroke-width="2.3"/><path d="M1512 18 V24.3 L1516.6 28.6" fill="none" stroke="#a8a8a8" stroke-width="2.3" stroke-linecap="butt" stroke-linejoin="miter"/><path d="M2077 1021" fill="none" stroke="#e8e8e8" stroke-width="1" stroke-linecap="round" stroke-linejoin="round" /><path d="M2080.55 18.43 A9.6 9.6 0 0 0 2089.57 34.05" fill="none" stroke="#c8c8c8" stroke-width="2.3" stroke-linecap="round" stroke-linejoin="round" /><path d="M2083.10 16.29 A9.6 9.6 0 0 1 2095.46 18.69" fill="none" stroke="#c8c8c8" stroke-width="2.3" stroke-linecap="round" stroke-linejoin="round" /><path d="M2097.17 27.08 L2096.21 29.40" fill="none" stroke="#c8c8c8" stroke-width="2.3" stroke-linecap="round" stroke-linejoin="round" /><path d="M2099 13.8 V21.5 H2091.5 Z" fill="#c8c8c8"/><path d="M2075.8 13.8 L2098.2 35.8" fill="none" stroke="#c8c8c8" stroke-width="2.4" stroke-linecap="round" stroke-linejoin="round" /><circle cx="2087.9" cy="18.8" r="1.2" fill="#c8c8c8"/><rect x="444.2" y="1152.9" width="25.8" height="20.2" fill="#c8c8c8"/><rect x="446" y="1158.3" width="22.2" height="13" fill="#242424"/><path d="M449.5 1159.8 L454 1163.5 L449.5 1167" fill="none" stroke="#c8c8c8" stroke-width="2" stroke-linecap="round" stroke-linejoin="round" stroke-linecap="butt"/><rect x="457" y="1167.5" width="7.5" height="2" fill="#c8c8c8"/><path d="M514.5 1164 Q528 1150 541.5 1164 Q528 1178 514.5 1164 Z" fill="none" stroke="#c8c8c8" stroke-width="2.2" stroke-linecap="round" stroke-linejoin="round" /><path d="M522 1164 A6 6 0 0 1 532.5 1159" fill="none" stroke="#c8c8c8" stroke-width="2.2" stroke-linecap="round" stroke-linejoin="round" /><path d="M517.5 1154 L537.5 1174.5" fill="none" stroke="#c8c8c8" stroke-width="2.2" stroke-linecap="round" stroke-linejoin="round" /><path d="M586.5 1156 V1152 Q586.5 1150.5 588 1150.5 H592 M605.5 1150.5 H609.5 Q611 1150.5 611 1152 V1156 M611 1169.5 V1173.5 Q611 1175 609.5 1175 H605.5 M592 1175 H588 Q586.5 1175 586.5 1173.5 V1169.5" fill="none" stroke="#c8c8c8" stroke-width="2.2" stroke-linecap="round" stroke-linejoin="round" /><path d="M598.8 1154.5 L605.5 1158.2 V1166.5 L598.8 1170.3 L592 1166.5 V1158.2 Z M592 1158.2 L598.8 1162 L605.5 1158.2 M598.8 1162 V1170.3" fill="none" stroke="#c8c8c8" stroke-width="2.2" stroke-linecap="round" stroke-linejoin="round" /><circle cx="670" cy="1162.6" r="11" fill="none" stroke="#c8c8c8" stroke-width="2.2"/><circle cx="670" cy="1162.6" r="7.3" fill="#c8c8c8"/><path d="M732 1168.5 L729.5 1154 Q729.3 1152.5 730.8 1152.3 L746 1151.2" fill="none" stroke="#c8c8c8" stroke-width="2.2" stroke-linecap="round" stroke-linejoin="round" /><path d="M735.5 1157.5 H750.5 Q752.5 1157.5 752.5 1159.5 V1168.5 L746.5 1174.5 H737.5 Q735.5 1174.5 735.5 1172.5 Z" fill="none" stroke="#c8c8c8" stroke-width="2.2" stroke-linecap="round" stroke-linejoin="round" /><path d="M746 1174 V1169 H752" fill="#c8c8c8"/></svg>
<!-- MODAL -->
<div class="a" style="left:341px;top:34px;width:1423px;height:351px;background:#212121;border:1px solid #3f3f3f;border-radius:9px;box-shadow:0 4px 24px rgba(0,0,0,0.55);"></div>
<div class="t" style="left:372px;top:68px;font-size:25px;font-weight:bold;color:#d0d0d0;letter-spacing:0.4px;">Motor I/O</div>
<svg style="left:1710px;top:75px" width="14" height="14" viewBox="0 0 14 14"><line x1="1" y1="1" x2="13" y2="13" stroke="#fff" stroke-width="2.3"/><line x1="13" y1="1" x2="1" y2="13" stroke="#fff" stroke-width="2.3"/></svg>
<div class="hl" style="left:342px;top:123px;width:1423px;background:#3f3f3f;"></div>
<div class="a" style="left:965px;top:154px;width:158px;height:200px;border:1px solid #545454;"></div>
<svg style="left:774px;top:182px" width="24" height="24" viewBox="0 0 24 24"><circle cx="12" cy="12" r="10.6" fill="none" stroke="#cdcdcd" stroke-width="2"/><line x1="6.5" y1="12" x2="17.5" y2="12" stroke="#cdcdcd" stroke-width="2"/><line x1="12" y1="6.5" x2="12" y2="17.5" stroke="#cdcdcd" stroke-width="2"/></svg>
<div class="hl" style="left:799px;top:193px;width:94px;height:1px;background:#c4c4c4;"></div>
<div class="t" style="left:899.5px;top:186px;font-size:19.5px;color:#d0d0d0;">State</div>
<div class="a" style="left:953px;top:181.5px;width:25px;height:25px;border-radius:50%;background:#0a9549;color:#f2f2f2;font-size:15px;line-height:26px;text-align:center;letter-spacing:-0.5px;">01</div>
<div class="t" style="left:991px;top:186px;font-size:19.5px;color:#d0d0d0;">#1</div>
<svg style="left:774px;top:222px" width="24" height="24" viewBox="0 0 24 24"><circle cx="12" cy="12" r="10.6" fill="none" stroke="#cdcdcd" stroke-width="2"/><line x1="6.5" y1="12" x2="17.5" y2="12" stroke="#cdcdcd" stroke-width="2"/><line x1="12" y1="6.5" x2="12" y2="17.5" stroke="#cdcdcd" stroke-width="2"/></svg>
<div class="hl" style="left:799px;top:233px;width:11px;height:1px;background:#c4c4c4;"></div>
<div class="t" style="left:816.0px;top:226px;font-size:19.5px;color:#d0d0d0;">Target Position</div>
<div class="a" style="left:953px;top:221.5px;width:25px;height:25px;border-radius:50%;background:#0a9549;color:#f2f2f2;font-size:16px;line-height:26px;text-align:center;">D</div>
<div class="t" style="left:991px;top:226px;font-size:19.5px;color:#d0d0d0;">#2</div>
<svg style="left:774px;top:262px" width="24" height="24" viewBox="0 0 24 24"><circle cx="12" cy="12" r="10.6" fill="none" stroke="#cdcdcd" stroke-width="2"/><line x1="6.5" y1="12" x2="17.5" y2="12" stroke="#cdcdcd" stroke-width="2"/><line x1="12" y1="6.5" x2="12" y2="17.5" stroke="#cdcdcd" stroke-width="2"/></svg>
<div class="hl" style="left:799px;top:273px;width:13px;height:1px;background:#c4c4c4;"></div>
<div class="t" style="left:818.2px;top:266px;font-size:19.5px;color:#d0d0d0;">Target Velocity</div>
<div class="a" style="left:953px;top:261.5px;width:25px;height:25px;border-radius:50%;background:#0a9549;color:#f2f2f2;font-size:16px;line-height:26px;text-align:center;">D</div>
<div class="t" style="left:991px;top:266px;font-size:19.5px;color:#d0d0d0;">#3</div>
<svg style="left:774px;top:302px" width="24" height="24" viewBox="0 0 24 24"><circle cx="12" cy="12" r="10.6" fill="none" stroke="#cdcdcd" stroke-width="2"/><line x1="6.5" y1="12" x2="17.5" y2="12" stroke="#cdcdcd" stroke-width="2"/><line x1="12" y1="6.5" x2="12" y2="17.5" stroke="#cdcdcd" stroke-width="2"/></svg>
<div class="hl" style="left:799px;top:313px;width:44px;height:1px;background:#c4c4c4;"></div>
<div class="t" style="left:848.6px;top:306px;font-size:19.5px;color:#d0d0d0;">Force Limit</div>
<div class="a" style="left:953px;top:301.5px;width:25px;height:25px;border-radius:50%;background:#0a9549;color:#f2f2f2;font-size:16px;line-height:26px;text-align:center;">D</div>
<div class="t" style="left:991px;top:306px;font-size:19.5px;color:#d0d0d0;">#4</div>
<div class="t" style="left:1077px;top:186px;font-size:19.5px;color:#d0d0d0;">#5</div>
<div class="a" style="left:1111.5px;top:181.5px;width:25px;height:25px;border-radius:50%;background:#f8215e;color:#f6f6f6;font-size:16px;line-height:26px;text-align:center;">D</div>
<div class="t" style="left:1145px;top:186px;font-size:19.5px;color:#d0d0d0;">Current Position</div>
<div class="hl" style="left:1294px;top:193px;width:14px;height:1px;background:#c4c4c4;"></div>
<svg style="left:1310px;top:182px" width="24" height="24" viewBox="0 0 24 24"><circle cx="12" cy="12" r="10.6" fill="none" stroke="#cdcdcd" stroke-width="2"/><line x1="6.5" y1="12" x2="17.5" y2="12" stroke="#cdcdcd" stroke-width="2"/><line x1="12" y1="6.5" x2="12" y2="17.5" stroke="#cdcdcd" stroke-width="2"/></svg>
<div class="t" style="left:1077px;top:226px;font-size:19.5px;color:#d0d0d0;">#6</div>
<div class="a" style="left:1111.5px;top:221.5px;width:25px;height:25px;border-radius:50%;background:#f8215e;color:#f6f6f6;font-size:16px;line-height:26px;text-align:center;">D</div>
<div class="t" style="left:1145px;top:226px;font-size:19.5px;color:#d0d0d0;">Current Velocity</div>
<div class="hl" style="left:1292px;top:233px;width:16px;height:1px;background:#c4c4c4;"></div>
<svg style="left:1310px;top:222px" width="24" height="24" viewBox="0 0 24 24"><circle cx="12" cy="12" r="10.6" fill="none" stroke="#cdcdcd" stroke-width="2"/><line x1="6.5" y1="12" x2="17.5" y2="12" stroke="#cdcdcd" stroke-width="2"/><line x1="12" y1="6.5" x2="12" y2="17.5" stroke="#cdcdcd" stroke-width="2"/></svg>
<div class="t" style="left:1077px;top:266px;font-size:19.5px;color:#d0d0d0;">#7</div>
<div class="a" style="left:1111.5px;top:261.5px;width:25px;height:25px;border-radius:50%;background:#f8215e;color:#f6f6f6;font-size:16px;line-height:26px;text-align:center;">D</div>
<div class="t" style="left:1145px;top:266px;font-size:19.5px;color:#d0d0d0;">Current Force</div>
<div class="hl" style="left:1274px;top:273px;width:34px;height:1px;background:#c4c4c4;"></div>
<svg style="left:1310px;top:262px" width="24" height="24" viewBox="0 0 24 24"><circle cx="12" cy="12" r="10.6" fill="none" stroke="#cdcdcd" stroke-width="2"/><line x1="6.5" y1="12" x2="17.5" y2="12" stroke="#cdcdcd" stroke-width="2"/><line x1="12" y1="6.5" x2="12" y2="17.5" stroke="#cdcdcd" stroke-width="2"/></svg>
</body></html>
